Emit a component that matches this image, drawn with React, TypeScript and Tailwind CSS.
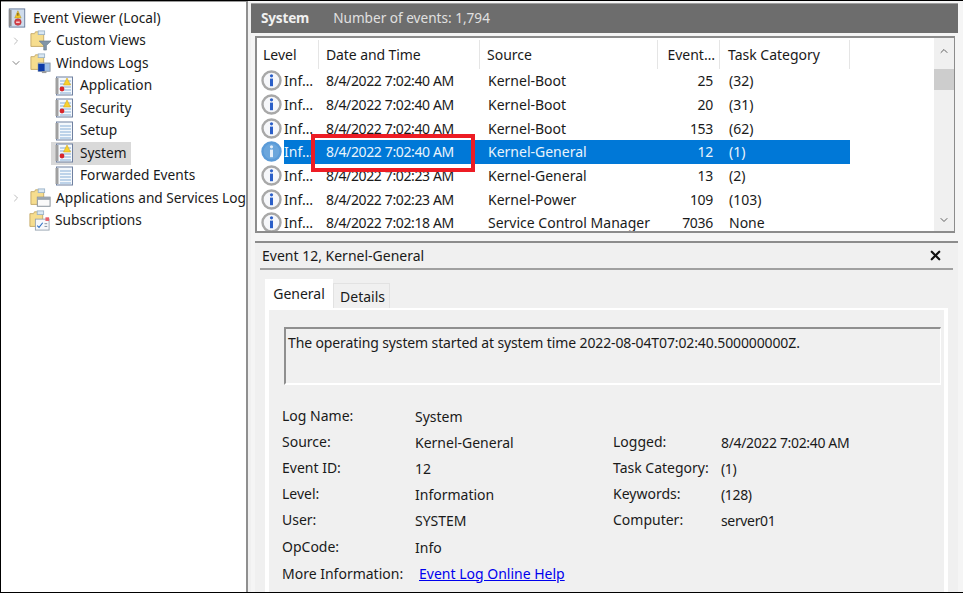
import { X, ChevronRight, ChevronDown, ChevronUp } from "lucide-react";

const font = "font-['Noto_Sans','Open_Sans',sans-serif]";

function LogIcon({ alert }: { alert?: boolean }) {
  return (
    <svg width="18" height="20" viewBox="0 0 18 20" className="shrink-0">
      <rect x="1.5" y="1" width="16" height="18" fill="#f4f8fc" stroke="#6f80a0" />
      <rect x="0.5" y="2" width="3" height="16" fill="#a0a0a0" />
      <path d="M5 5h11M5 8h11M5 11h11M5 14h11M5 17h11" stroke="#86add6" />
      {alert && <path d="M8.5 9 L12 2 L15.5 9 Z" fill="#f8d22e" stroke="#d8a81c" strokeWidth="0.6" />}
      {alert && <circle cx="7" cy="13" r="2.4" fill="#d8262c" />}
    </svg>
  );
}

function FolderIcon({ kind }: { kind: "filter" | "logs" | "window" | "subs" }) {
  return (
    <svg width="21" height="21" viewBox="0 0 23 23" className="shrink-0">
      <path d="M1 4h4l1-2h7v2h2v14H1z" fill="#f6dd8e" stroke="#c4a867" />
      <rect x="9" y="1" width="7" height="4" fill="#d9e7f2" stroke="#9db4c8" />
      {kind === "filter" && <path d="M10 12h13l-5 5v5h-3v-5z" fill="#8296a8" stroke="#5e7082" strokeWidth="0.6" />}
      {kind === "logs" && (
        <g>
          <rect x="9" y="11" width="13" height="9" fill="#9fc0e8" stroke="#8a97a6" />
          <rect x="9" y="12" width="7" height="8" fill="#0d3aa8" />
          <rect x="13" y="20" width="5" height="2" fill="#9a9a9a" />
        </g>
      )}
      {kind === "window" && (
        <g>
          <rect x="8" y="10" width="14" height="10" fill="#fafafa" stroke="#808a94" />
          <rect x="8" y="10" width="14" height="3" fill="#9aa4ae" />
        </g>
      )}
      {kind === "subs" && (
        <g>
          <rect x="7" y="10" width="15" height="12" fill="#f6f8fb" stroke="#97a3b0" />
          <rect x="18" y="8" width="4" height="4" fill="#e8606a" />
          <path d="M9 17l2 2 4-5" fill="none" stroke="#2f6fc4" strokeWidth="1.2" />
          <path d="M17 15h3M17 18h3" stroke="#7a8a9a" />
        </g>
      )}
    </svg>
  );
}

function ViewerIcon() {
  return (
    <svg width="18" height="20" viewBox="0 0 19 22" className="shrink-0">
      <rect x="1" y="1" width="17" height="20" fill="#cfdcec" stroke="#66799a" />
      <rect x="0.5" y="2" width="3" height="18" fill="#8b8b8b" />
      <path d="M7 11 L10.5 3 L14 11 Z" fill="#f3c726" stroke="#b08a18" strokeWidth="0.5" />
      <rect x="10" y="5.5" width="1" height="3" fill="#4b3a10" />
      <circle cx="10.5" cy="15.5" r="3.6" fill="#d8424a" stroke="#a62a32" strokeWidth="0.6" />
      <rect x="8.5" y="15" width="4" height="1.2" fill="#fff" />
    </svg>
  );
}

function InfoIcon({ selected }: { selected?: boolean }) {
  return (
    <svg width="21" height="21" viewBox="0 0 21 21" className="shrink-0">
      <circle cx="10.5" cy="10.5" r="9" fill={selected ? "#6ba6dc" : "#f6f7fa"} stroke={selected ? "#5b9bd8" : "#a8a8a8"} strokeWidth="2.4" />
      <circle cx="10.5" cy="5.8" r="1.6" fill={selected ? "#e6f0fa" : "#2b5fc8"} />
      <rect x="9" y="8.6" width="3" height="7.6" fill={selected ? "#e6f0fa" : "#2b5fc8"} />
    </svg>
  );
}

const tree = [
  { label: "Custom Views", arrow: "right", icon: <FolderIcon kind="filter" />, indent: "pl-[8px]" },
  { label: "Windows Logs", arrow: "down", icon: <FolderIcon kind="logs" />, indent: "pl-[8px]" },
  { label: "Application", icon: <LogIcon alert />, indent: "pl-[53px]" },
  { label: "Security", icon: <LogIcon alert />, indent: "pl-[53px]" },
  { label: "Setup", icon: <LogIcon />, indent: "pl-[53px]" },
  { label: "System", icon: <LogIcon alert />, indent: "pl-[53px]", active: true },
  { label: "Forwarded Events", icon: <LogIcon />, indent: "pl-[53px]" },
  { label: "Applications and Services Logs", arrow: "right", icon: <FolderIcon kind="window" />, indent: "pl-[8px]" },
  { label: "Subscriptions", icon: <FolderIcon kind="subs" />, indent: "pl-[27px]" },
];

const rows = [
  ["8/4/2022 7:02:40 AM", "Kernel-Boot", "25", "(32)"],
  ["8/4/2022 7:02:40 AM", "Kernel-Boot", "20", "(31)"],
  ["8/4/2022 7:02:40 AM", "Kernel-Boot", "153", "(62)"],
  ["8/4/2022 7:02:40 AM", "Kernel-General", "12", "(1)"],
  ["8/4/2022 7:02:23 AM", "Kernel-General", "13", "(2)"],
  ["8/4/2022 7:02:23 AM", "Kernel-Power", "109", "(103)"],
  ["8/4/2022 7:02:18 AM", "Service Control Manager", "7036", "None"],
];

const fields = [
  { label: "Log Name:", value: "System" },
  { label: "Source:", value: "Kernel-General", label2: "Logged:", value2: "8/4/2022 7:02:40 AM" },
  { label: "Event ID:", value: "12", label2: "Task Category:", value2: "(1)" },
  { label: "Level:", value: "Information", label2: "Keywords:", value2: "(128)" },
  { label: "User:", value: "SYSTEM", label2: "Computer:", value2: "server01" },
  { label: "OpCode:", value: "Info" },
];

export default function App() {
  return (
    <div className={`${font} flex h-[593px] w-[963px] overflow-hidden border-y border-l border-black bg-white text-[14px] text-[#1a1a1a]`}>
      {/* tree */}
      <div className="h-full w-[245px] shrink-0 overflow-hidden border-t border-[#9a9a9a] bg-white pt-[5px] pl-px text-[13.7px]">
        <div className="flex h-[22.5px] items-center gap-[7px] pl-[6px] whitespace-nowrap">
          <ViewerIcon />
          <span>Event Viewer (Local)</span>
        </div>
        {tree.map((t) => (
          <div key={t.label} className={`flex h-[22.5px] items-center whitespace-nowrap ${t.indent}`}>
            {t.arrow === "right" && <ChevronRight size={12} strokeWidth={1.5} className="mr-[8px] shrink-0 text-[#a6a6a6]" />}
            {t.arrow === "down" && <ChevronDown size={12} strokeWidth={1.5} className="mr-[8px] shrink-0 text-[#555555]" />}
            {t.active ? (
              <div className="-ml-[4px] flex h-[23px] w-[80px] items-center gap-[7px] bg-[#d9d9d9] pl-[4px]">
                {t.icon}
                <span>{t.label}</span>
              </div>
            ) : (
              <div className={`flex items-center ${t.indent === "pl-[53px]" ? "gap-[7px]" : "gap-[5px]"}`}>
                {t.icon}
                <span>{t.label}</span>
              </div>
            )}
          </div>
        ))}
      </div>

      {/* splitter */}
      <div className="h-full w-[5px] shrink-0 border-l-2 border-[#8f8f8f] bg-[#f0f0f0]" />

      {/* right side */}
      <div className="flex min-w-0 flex-1 flex-col bg-[#f5f5f5] pr-[5px] pt-[2px]">
        <div className="flex h-[30px] shrink-0 items-center gap-[24px] border-t border-[#a0a0a0] bg-[#6d6d6d] pl-[10px] text-[13.6px] text-[#f0f0f0]">
          <span className="font-bold tracking-[-0.2px]">System</span>
          <span className="text-[#e0e0e0]">Number of events: 1,794</span>
        </div>

        {/* event list */}
        <div className="mt-[3px] ml-[4px] mr-[3px] flex h-[197px] shrink-0 border-y-2 border-l-2 border-[#8c8c8c] border-r border-r-[#8c8c8c] bg-white">
          <div className="relative min-w-0 flex-1 overflow-hidden">
            <div className="flex h-[31px] items-end">
              <div className="flex h-[29px] w-[62px] items-center border-r border-[#e5e5e5] pl-[6px]">Level</div>
              <div className="flex h-[29px] w-[161px] items-center border-r border-[#e5e5e5] pl-[7px] tracking-[-0.1px]">Date and Time</div>
              <div className="flex h-[29px] w-[178px] items-center border-r border-[#e5e5e5] pl-[7px]">Source</div>
              <div className="flex h-[29px] w-[62px] items-center justify-end border-r border-[#e5e5e5] pr-[4px]">Event…</div>
              <div className="flex h-[29px] w-[130px] items-center border-r border-[#e5e5e5] pl-[8px]">Task Category</div>
            </div>
            {rows.map((r, i) => {
              const sel = i === 3;
              return (
                <div key={i} className="relative flex h-[23.7px] items-center whitespace-nowrap">
                  <div className="flex w-[62px] items-center pl-[4px]">
                    <InfoIcon selected={sel} />
                    <span className={`ml-[2px] flex h-[24px] flex-1 items-center ${sel ? "bg-[#0078d7] text-[#eaf4fc]" : ""}`}>Inf…</span>
                  </div>
                  <div className={`flex h-[24px] w-[161px] items-center pl-[7px] tracking-[-0.37px] ${sel ? "bg-[#0078d7] text-[#eaf4fc]" : ""}`}>{r[0]}</div>
                  <div className={`flex h-[24px] w-[178px] items-center pl-[8px] ${sel ? "bg-[#0078d7] text-[#eaf4fc]" : ""}`}>{r[1]}</div>
                  <div className={`flex h-[24px] w-[62px] items-center justify-end pr-[7px] tracking-[-0.3px] ${sel ? "bg-[#0078d7] text-[#eaf4fc]" : ""}`}>{r[2]}</div>
                  <div className={`flex h-[24px] w-[130px] items-center pl-[9px] ${sel ? "bg-[#0078d7] text-[#eaf4fc]" : ""}`}>{r[3]}</div>
                </div>
              );
            })}
            {/* red callout */}
            <div className="absolute left-[54px] top-[96px] h-[38px] w-[164px] border-4 border-[#ed1c24]" />
          </div>
          <div className="flex w-[20px] shrink-0 flex-col items-center bg-[#f0f0f0]">
            <ChevronUp size={12} strokeWidth={2} className="mt-[3px] h-[20px] text-[#606060]" />
            <div className="mt-[8px] h-[21px] w-full bg-[#cdcdcd]" />
            <div className="flex-1" />
            <ChevronDown size={12} strokeWidth={2} className="mb-[1px] h-[20px] text-[#606060]" />
          </div>
        </div>

        {/* detail */}
        <div className="mt-[8px] ml-[4px] flex min-h-0 flex-1 flex-col border-t-2 border-[#8c8c8c] bg-[#f0f0f0]">
          <div className="mx-[5px] flex h-[27px] shrink-0 items-center justify-between border-b-2 border-[#a0a0a0] pl-[2px] pr-[7px]">
            <span>Event 12, Kernel-General</span>
            <X size={15} strokeWidth={3.5} className="mr-[3px] text-[#111111]" />
          </div>
          <div className="mt-[9px] flex h-[29px] shrink-0 items-end pl-[10px]">
            <div className="flex h-[29px] w-[68px] items-center justify-center bg-white">General</div>
            <div className="flex h-[25px] w-[57px] items-center justify-center border border-b-0 border-[#e2e2e2] bg-[#f0f0f0] pl-[2px]">Details</div>
          </div>
          <div className="ml-[10px] mr-[10px] flex-1 border-x-[4px] border-t-2 border-white bg-[#f0f0f0] pl-[15px] pr-[3px] pt-[17px]">
            <div className="h-[58px] border-y-2 border-l-2 border-r border-t-[#8f8f8f] border-l-[#8f8f8f] border-b-white border-r-white pl-[2px] pt-[3px] tracking-[-0.12px]">
              The operating system started at system time 2022-08-04T07:02:40.500000000Z.
            </div>
            <div className="mt-[18px] -ml-[2px] flex flex-col">
              {fields.map((f) => (
                <div key={f.label} className="flex h-[26.2px] items-center">
                  <span className="w-[133px] -translate-y-px">{f.label}</span>
                  <span className="w-[198px]">{f.value}</span>
                  {f.label2 && <span className="w-[108px] -translate-y-px">{f.label2}</span>}
                  {f.value2 && <span className="tracking-[-0.35px]">{f.value2}</span>}
                </div>
              ))}
              <div className="flex h-[26.2px] items-center">
                <span className="w-[137px]">More Information:</span>
                <a href="#" className="text-[#0000ee] underline">Event Log Online Help</a>
              </div>
            </div>
          </div>
        </div>
      </div>
    </div>
  );
}
